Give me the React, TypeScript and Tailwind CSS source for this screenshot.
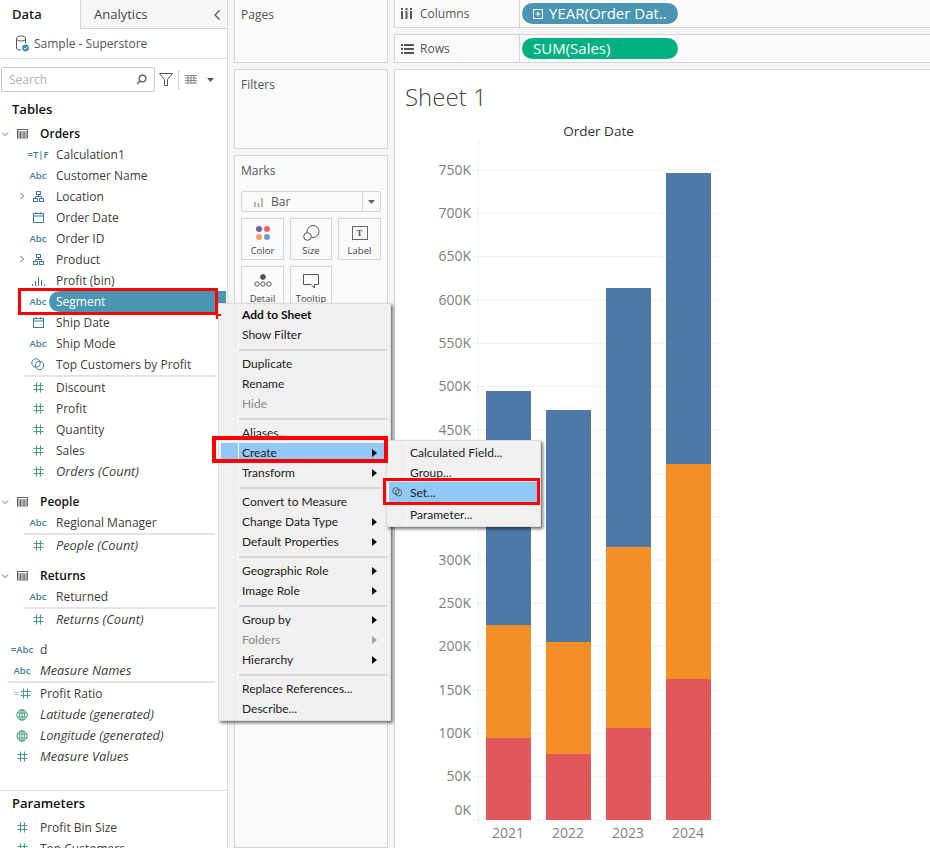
import React from "react";

const font = { fontFamily: '"Open Sans", "Noto Sans", sans-serif' };
const menuFont = { fontFamily: '"Lato", "Open Sans", sans-serif' };

const Hash = ({ c = "#4f9e7f" }: { c?: string }) => (
  <svg width="11" height="11" viewBox="0 0 11 11" fill="none" stroke={c} strokeWidth="1.1">
    <path d="M3.5 0.5V10.5M7.5 0.5V10.5M0.5 3.5H10.5M0.5 7.5H10.5" />
  </svg>
);
const Globe = () => (
  <svg width="12" height="12" viewBox="0 0 12 12" fill="none" stroke="#4f9e7f" strokeWidth="1">
    <circle cx="6" cy="6" r="5.2" />
    <ellipse cx="6" cy="6" rx="2.4" ry="5.2" />
    <path d="M1 4H11M1 8H11M6 1V11" />
  </svg>
);
const Cal = () => (
  <svg width="11" height="11" viewBox="0 0 11 11" fill="none" stroke="#3f7d9a" strokeWidth="1">
    <rect x="0.5" y="1.5" width="10" height="9" />
    <path d="M0.5 4H10.5M3 0V2.5M8 0V2.5" />
  </svg>
);
const Tree = () => (
  <svg width="11" height="11" viewBox="0 0 11 11" fill="none" stroke="#3f7d9a" strokeWidth="1">
    <rect x="3.5" y="0.5" width="4" height="3" />
    <rect x="0.5" y="7.5" width="4" height="3" />
    <rect x="6.5" y="7.5" width="4" height="3" />
    <path d="M5.5 3.5V5.5M2.5 7.5V5.5H8.5V7.5" />
  </svg>
);
const BinIcon = () => (
  <svg width="14" height="10" viewBox="0 0 14 10" fill="none" stroke="#3f7d9a" strokeWidth="1">
    <path d="M1.5 10V8M4.5 10V5M7.5 10V1M10.5 10V4M13.5 10V8" />
  </svg>
);
const SetIcon = ({ c = "#3f7d9a", size = 14 }: { c?: string; size?: number }) => (
  <svg width={size} height={size - 1} viewBox="0 0 14 13" fill="none" stroke={c} strokeWidth="1">
    <circle cx="5" cy="5" r="4.2" />
    <circle cx="8.5" cy="7.5" r="4.2" />
  </svg>
);
const TableIcon = () => (
  <svg width="11" height="11" viewBox="0 0 11 11" fill="none" stroke="#666" strokeWidth="1">
    <rect x="0.5" y="1.5" width="10" height="8.5" />
    <path d="M0.5 4H10.5M0.5 6H10.5M0.5 8H10.5M3.5 4V10M7 4V10" />
  </svg>
);
const Chevron = ({ down }: { down?: boolean }) => (
  <svg width="8" height="8" viewBox="0 0 8 8" fill="none" stroke="#666" strokeWidth="1">
    {down ? <path d="M1 2.5L4 5.5L7 2.5" /> : <path d="M2.5 1L5.5 4L2.5 7" />}
  </svg>
);
const TextIcon = ({ t }: { t: string }) => (
  <span className="whitespace-nowrap text-[9.5px] font-semibold leading-none text-[#3f7d9a]">{t}</span>
);

type Kind = "abc" | "hash" | "cal" | "tree" | "bin" | "set" | "calc" | "globe" | "eqabc" | "eqhash";
const iconOf = (k: Kind) => {
  if (k === "abc") return <TextIcon t="Abc" />;
  if (k === "hash") return <Hash />;
  if (k === "cal") return <Cal />;
  if (k === "tree") return <Tree />;
  if (k === "bin") return <BinIcon />;
  if (k === "set") return <SetIcon />;
  if (k === "globe") return <Globe />;
  if (k === "calc") return <TextIcon t="=T|F" />;
  if (k === "eqabc") return <TextIcon t="=Abc" />;
  return (
    <span className="flex items-center gap-px text-[9px] leading-none text-[#4f9e7f]">=<Hash /></span>
  );
};

const Field = ({ k, label, italic, indent = true, arrow, active }: { k: Kind; label: string; italic?: boolean; indent?: boolean; arrow?: boolean; active?: boolean }) => (
  <div className="flex h-[21px] shrink-0 items-center text-[12px] text-[#3d3d3d]">
    <div className={`relative flex shrink-0 items-center justify-center ${indent ? "ml-[26px] w-[24px]" : "ml-[10px] w-[24px]"}`}>
      {arrow && <span className="absolute left-[-8px] top-[1px]"><Chevron /></span>}
      {iconOf(k)}
    </div>
    {active ? (
      <div className="ml-[-1px] flex h-[21px] w-[177px] items-center rounded-l-full rounded-r-[8px] bg-[#4a96b2] pl-[7px] text-white">{label}</div>
    ) : (
      <span className={`ml-[6px] whitespace-nowrap ${italic ? "text-[12.8px] italic" : ""}`}>{label}</span>
    )}
  </div>
);

const Div = ({ left = 24 }: { left?: number }) => (
  <div className={`mr-[12px] h-[2px] shrink-0 bg-[#e3e3e3] ${left === 24 ? "ml-[24px]" : "ml-[8px]"}`} />
);

const Table = ({ name, mt }: { name: string; mt: string }) => (
  <div className={`flex h-[21px] shrink-0 items-center ${mt}`}>
    <span className="ml-[1px] w-[14px]"><Chevron down /></span>
    <span className="ml-[2px]"><TableIcon /></span>
    <span className="ml-[12px] text-[12px] font-semibold text-[#111]">{name}</span>
  </div>
);

const Sidebar = () => (
  <aside className="flex h-full w-[228px] shrink-0 flex-col overflow-hidden border-r border-[#d8d8d8] bg-white">
    <div className="flex h-[29px] shrink-0 text-[13px]">
      <div className="flex w-[80px] items-center pl-[12px] font-semibold text-[#222]">Data</div>
      <div className="flex flex-1 items-center justify-between border-b border-l border-[#d4d4d4] bg-[#f6f6f6] pl-[13px] pr-[6px] pt-[1px] text-[#444]">
        <span>Analytics</span>
        <svg width="8" height="12" viewBox="0 0 8 12" fill="none" stroke="#555" strokeWidth="1.2"><path d="M6.5 1.5L2 6L6.5 10.5" /></svg>
      </div>
    </div>
    <div className="flex h-[30px] shrink-0 items-center border-b border-[#e2e2e2] pl-[15px] text-[12px] text-[#555]">
      <svg width="14" height="17" viewBox="0 0 14 17" fill="none">
        <ellipse cx="6" cy="3.5" rx="4.5" ry="2.5" stroke="#555" />
        <path d="M1.5 3.5V13C1.5 14.5 3.5 15 6 15M10.5 3.5V8" stroke="#555" />
        <circle cx="10.5" cy="13" r="3.4" fill="#3f8cb4" />
        <path d="M9 13L10.2 14.2L12.2 11.9" stroke="#fff" />
      </svg>
      <span className="ml-[5px]">Sample - Superstore</span>
    </div>
    <div className="mt-[8px] flex h-[25px] shrink-0 items-center pl-[1px]">
      <div className="flex h-[25px] w-[154px] items-center justify-between rounded-[2px] border border-[#c8c8c8] pl-[7px] pr-[7px] text-[12px] text-[#b0b0b0]">
        <span>Search</span>
        <svg width="11" height="11" viewBox="0 0 11 11" fill="none" stroke="#555" strokeWidth="1.2"><circle cx="6.5" cy="4.5" r="3.4" /><path d="M4 7L1 10" /></svg>
      </div>
      <svg className="ml-[4px]" width="14" height="13" viewBox="0 0 14 13" fill="none" stroke="#555"><path d="M0.5 0.5H13.5L8.5 6.5V12.5H5.5V6.5Z" /></svg>
      <div className="ml-[5px] h-[20px] w-px bg-[#d4d4d4]" />
      <svg className="ml-[6px]" width="12" height="9" viewBox="0 0 12 9" fill="none" stroke="#888"><path d="M0 0.5H12M0 3H12M0 5.5H12M0 8H12M3 0V9M6 0V9M9 0V9" /></svg>
      <svg className="ml-[10px]" width="7" height="4" viewBox="0 0 7 4"><path d="M0 0H7L3.5 4Z" fill="#555" /></svg>
    </div>
    <div className="ml-[12px] mt-[7px] h-[20px] shrink-0 text-[13px] font-semibold leading-[20px] text-[#111]">Tables</div>
    <Table name="Orders" mt="mt-[4px]" />
    <Field k="calc" label="Calculation1" />
    <Field k="abc" label="Customer Name" />
    <Field k="tree" label="Location" arrow />
    <Field k="cal" label="Order Date" />
    <Field k="abc" label="Order ID" />
    <Field k="tree" label="Product" arrow />
    <Field k="bin" label="Profit (bin)" />
    <Field k="abc" label="Segment" active />
    <Field k="cal" label="Ship Date" />
    <Field k="abc" label="Ship Mode" />
    <Field k="set" label="Top Customers by Profit" />
    <Div />
    <Field k="hash" label="Discount" />
    <Field k="hash" label="Profit" />
    <Field k="hash" label="Quantity" />
    <Field k="hash" label="Sales" />
    <Field k="hash" label="Orders (Count)" italic />
    <Table name="People" mt="mt-[9px]" />
    <Field k="abc" label="Regional Manager" />
    <Div />
    <Field k="hash" label="People (Count)" italic />
    <Table name="Returns" mt="mt-[9px]" />
    <Field k="abc" label="Returned" />
    <Div />
    <Field k="hash" label="Returns (Count)" italic />
    <div className="h-[9px] shrink-0" />
    <Field k="eqabc" label="d" indent={false} />
    <Field k="abc" label="Measure Names" italic indent={false} />
    <Div left={8} />
    <Field k="eqhash" label="Profit Ratio" indent={false} />
    <Field k="globe" label="Latitude (generated)" italic indent={false} />
    <Field k="globe" label="Longitude (generated)" italic indent={false} />
    <Field k="hash" label="Measure Values" italic indent={false} />
    <div className="mt-[23px] h-px shrink-0 bg-[#e2e2e2]" />
    <div className="ml-[12px] mt-[2px] h-[21px] shrink-0 text-[13px] font-semibold leading-[21px] text-[#111]">Parameters</div>
    <div className="h-[3px] shrink-0" />
    <Field k="hash" label="Profit Bin Size" indent={false} />
    <Field k="hash" label="Top Customers" indent={false} />
  </aside>
);

const MarkBtn = ({ label, children, narrow }: { label: string; children: React.ReactNode; narrow?: boolean }) => (
  <div className={`flex h-[42px] flex-col items-center justify-between border border-[#d4d4d4] pb-[2px] pt-[5px] text-[9.5px] leading-[12px] text-[#444] ${narrow ? "w-[42px]" : "w-[43px]"}`}>
    <div className="flex h-[18px] items-center">{children}</div>
    <span>{label}</span>
  </div>
);

const Card = ({ title, className, children }: { title: string; className: string; children?: React.ReactNode }) => (
  <div className={`shrink-0 border border-[#d4d4d4] bg-[#fafafa] px-[6px] ${className}`}>
    <div className="text-[12px] leading-[16px] text-[#555]">{title}</div>
    {children}
  </div>
);

const Middle = () => (
  <div className="flex h-full w-[166px] shrink-0 flex-col gap-[6px] px-[6px]">
    <Card title="Pages" className="mt-[-1px] h-[64px] pt-[7px]" />
    <Card title="Filters" className="h-[80px] pt-[7px]" />
    <Card title="Marks" className="flex-1 pt-[7px]">
      <div className="mt-[12px] flex h-[21px] w-[140px] items-center rounded-[2px] border border-[#d4d4d4] text-[12px] text-[#555]">
        <div className="flex flex-1 items-center pl-[12px]">
          <svg width="10" height="10" viewBox="0 0 10 10" fill="none" stroke="#999" strokeWidth="1.4"><path d="M1 10V5M4.5 10V6M8 10V1" /></svg>
          <span className="ml-[7px]">Bar</span>
        </div>
        <div className="flex h-full w-[18px] items-center justify-center border-l border-[#d4d4d4]">
          <svg width="7" height="4" viewBox="0 0 7 4"><path d="M0 0H7L3.5 4Z" fill="#666" /></svg>
        </div>
      </div>
      <div className="mt-[6px] flex w-[140px] flex-wrap gap-x-[6px] gap-y-[6px]">
        <MarkBtn label="Color">
          <svg width="16" height="16" viewBox="0 0 16 16"><circle cx="4" cy="4" r="3" fill="#76609a" /><circle cx="12" cy="4" r="3" fill="#ec5f6e" /><circle cx="4" cy="12" r="3" fill="#f0a06a" /><circle cx="12" cy="12" r="3" fill="#6e9bcf" /></svg>
        </MarkBtn>
        <MarkBtn label="Size" narrow>
          <svg width="17" height="16" viewBox="0 0 17 16" fill="none" stroke="#555"><circle cx="10" cy="6.5" r="6" /><circle cx="4.5" cy="11.5" r="3.8" fill="#fafafa" /></svg>
        </MarkBtn>
        <MarkBtn label="Label">
          <div className="flex h-[14px] w-[16px] items-center justify-center border border-[#666] text-[9px] font-bold leading-none text-[#555]" style={{ fontFamily: '"Liberation Serif", serif' }}>T</div>
        </MarkBtn>
        <MarkBtn label="Detail">
          <svg width="18" height="14" viewBox="0 0 18 14" fill="none" stroke="#555"><circle cx="9" cy="3" r="2.4" fill="#555" /><circle cx="3" cy="10" r="2.2" /><circle cx="9" cy="10" r="2.2" /><circle cx="15" cy="10" r="2.2" /></svg>
        </MarkBtn>
        <MarkBtn label="Tooltip" narrow>
          <svg width="16" height="15" viewBox="0 0 16 15" fill="none" stroke="#555"><path d="M0.5 0.5H15.5V10.5H11.5V14L8 10.5H0.5Z" /></svg>
        </MarkBtn>
      </div>
    </Card>
  </div>
);

const Shelf = ({ label, icon, className, pill, green }: { label: string; icon: React.ReactNode; className: string; pill: React.ReactNode; green?: boolean }) => (
  <div className={`flex shrink-0 border-b border-l border-[#d4d4d4] bg-[#fafafa] ${className}`}>
    <div className="flex w-[125px] items-center border-r border-[#d4d4d4] pl-[6px] text-[12px] text-[#555]">
      <span className="flex w-[19px] justify-start">{icon}</span>
      <span>{label}</span>
    </div>
    <div className={`ml-[2px] flex h-[21px] w-[156px] items-center self-center whitespace-nowrap rounded-full pl-[11px] text-[15px] text-white ${green ? "bg-[#00b180]" : "bg-[#4a96b2]"}`}>{pill}</div>
  </div>
);

const years = [
  { y: "2021", x: 486, top: 391, o: 625, r: 738 },
  { y: "2022", x: 546, top: 410, o: 642, r: 754 },
  { y: "2023", x: 606, top: 288, o: 547, r: 728 },
  { y: "2024", x: 666, top: 173, o: 464, r: 679 },
];
const ticks = Array.from({ length: 16 }, (_, i) => i * 50);

const Chart = () => (
  <svg className="shrink-0" width="535" height="728" viewBox="395 120 535 728" style={{ fontFamily: '"Open Sans", sans-serif' }}>
    <text x="598.5" y="135.5" textAnchor="middle" fontSize="13.5" fontWeight="500" fill="#333">Order Date</text>
    <path d="M478.5 141V822" stroke="#f0f0f0" />
    {ticks.map((t) => {
      const y = 820 - t * 0.8667;
      return (
        <g key={t}>
          <path d={`M473 ${y}H719`} stroke="#f0f0f0" strokeWidth="1" />
          <text x="471" y={t === 0 ? 815 : y + 4.8} textAnchor="end" fontSize="14" fill="#7f7f7f">{t}K</text>
        </g>
      );
    })}
    {years.map((b) => (
      <g key={b.y}>
        <rect x={b.x} y={b.top} width="45" height={b.o - b.top} fill="#4e79a7" />
        <rect x={b.x} y={b.o} width="45" height={b.r - b.o} fill="#f59029" />
        <rect x={b.x} y={b.r} width="45" height={820 - b.r} fill="#e1575a" />
        <text x={b.x + 22} y="838" textAnchor="middle" fontSize="14" fill="#7f7f7f">{b.y}</text>
      </g>
    ))}
    <path d="M478.5 821.5V824M538.5 821.5V824M598.5 821.5V824M658.5 821.5V824M718.5 821.5V824" stroke="#e8e8e8" />
  </svg>
);

const Right = () => (
  <div className="flex h-full flex-1 flex-col gap-[6px]">
    <Shelf
      label="Columns"
      className="h-[28px]"
      icon={<svg width="11" height="11" viewBox="0 0 11 11" fill="#555"><rect x="0" y="3" width="2" height="8" /><rect x="4.5" y="3" width="2" height="8" /><rect x="9" y="3" width="2" height="8" /><rect x="0" y="0" width="2" height="2" /><rect x="4.5" y="0" width="2" height="2" /><rect x="9" y="0" width="2" height="2" /></svg>}
      pill={
        <span className="flex items-center">
          <svg className="mr-[6px]" width="10" height="10" viewBox="0 0 10 10" fill="none" stroke="#fff"><rect x="0.5" y="0.5" width="9" height="9" /><path d="M2.5 5H7.5M5 2.5V7.5" /></svg>
          YEAR(Order Dat..
        </span>
      }
    />
    <Shelf
      label="Rows"
      className="h-[29px] border-t"
      green
      icon={<svg width="13" height="10" viewBox="0 0 13 10" fill="#555"><rect x="0" y="0" width="2" height="2" /><rect x="3" y="0" width="10" height="2" /><rect x="0" y="4" width="2" height="2" /><rect x="3" y="4" width="10" height="2" /><rect x="0" y="8" width="2" height="2" /><rect x="3" y="8" width="10" height="2" /></svg>}
      pill="SUM(Sales)"
    />
    <div className="flex flex-1 flex-col border-l border-t border-[#d4d4d4] bg-white">
      <div className="ml-[10px] mt-[10px] h-[40px] shrink-0 text-[24px] font-light leading-[34px] text-[#444]">Sheet 1</div>
      <Chart />
    </div>
  </div>
);

const Item = ({ label, bold, disabled, arrow, active }: { label: string; bold?: boolean; disabled?: boolean; arrow?: boolean; active?: boolean }) => (
  <div className={`flex h-[20px] items-center justify-between text-[12px] ${active ? "mx-[2px] bg-[#90c8f6] pl-[21px] pr-[11px]" : "pl-[23px] pr-[13px]"} ${bold ? "font-bold text-[#111]" : disabled ? "text-[#8a8a8a]" : "text-[#222]"}`}>
    <span>{label}</span>
    {arrow && <svg width="5" height="8" viewBox="0 0 5 8"><path d="M0 0L5 4L0 8Z" fill={disabled ? "#a0a0a0" : "#111"} /></svg>}
  </div>
);
const Sep = () => (
  <div className="flex h-[9px] items-center pl-[20px] pr-[3px]"><div className="h-[2px] w-full bg-[#d6d6d6]" /></div>
);

const ContextMenu = () => (
  <div className="absolute left-[218px] top-[303px] z-10 w-[173px] border border-[#dcdcdc] bg-[#f0f0f0] py-[1px] shadow-[2px_2px_3px_rgba(0,0,0,0.55)]" style={menuFont}>
    <div className="absolute bottom-0 left-[19px] top-0 w-px bg-[#fafafa]" />
    <Item label="Add to Sheet" bold />
    <Item label="Show Filter" />
    <Sep />
    <Item label="Duplicate" />
    <Item label="Rename" />
    <Item label="Hide" disabled />
    <Sep />
    <Item label="Aliases..." />
    <Item label="Create" arrow active />
    <Item label="Transform" arrow />
    <Sep />
    <Item label="Convert to Measure" />
    <Item label="Change Data Type" arrow />
    <Item label="Default Properties" arrow />
    <Sep />
    <Item label="Geographic Role" arrow />
    <Item label="Image Role" arrow />
    <Sep />
    <Item label="Group by" arrow />
    <Item label="Folders" arrow disabled />
    <Item label="Hierarchy" arrow />
    <Sep />
    <Item label="Replace References..." />
    <Item label="Describe..." />
  </div>
);

const SubMenu = () => (
  <div className="absolute left-[386px] top-[440px] z-20 w-[155px] border border-[#dcdcdc] bg-[#f0f0f0] pb-[1px] pt-[2px] shadow-[2px_2px_3px_rgba(0,0,0,0.55)]" style={menuFont}>
    <div className="absolute bottom-0 left-[19px] top-0 w-px bg-[#fafafa]" />
    <Item label="Calculated Field..." />
    <Item label="Group..." />
    <div className="relative mx-[2px] mb-[1px] mt-[-1px] flex h-[22px] items-center bg-[#90c8f6] pl-[21px] text-[12px] text-[#222]">
      <span className="absolute left-[3px] top-[5px]"><SetIcon c="#444" size={11} /></span>
      Set...
    </div>
    <Item label="Parameter..." />
  </div>
);

export default function App() {
  return (
    <div className="relative flex h-[848px] w-[930px] overflow-hidden bg-[#f5f5f5]" style={font}>
      <Sidebar />
      <Middle />
      <Right />
      <ContextMenu />
      <SubMenu />
      <div className="absolute left-[18px] top-[288px] z-30 h-[27px] w-[200px] border-[3px] border-[#ff0000]" />
      <div className="absolute left-[216px] top-[313px] z-30 h-[6px] w-[2px] bg-[#ff0000]" />
      <div className="absolute left-[216px] top-[314px] z-30 h-[2px] w-[5px] bg-[#ff0000]" />
      <div className="absolute left-[212px] top-[436px] z-30 h-[27px] w-[176px] border-[4px] border-[#ff0000]" />
      <div className="absolute left-[383px] top-[478px] z-30 h-[27px] w-[157px] border-[3px] border-[#ff0000]" />
    </div>
  );
}
